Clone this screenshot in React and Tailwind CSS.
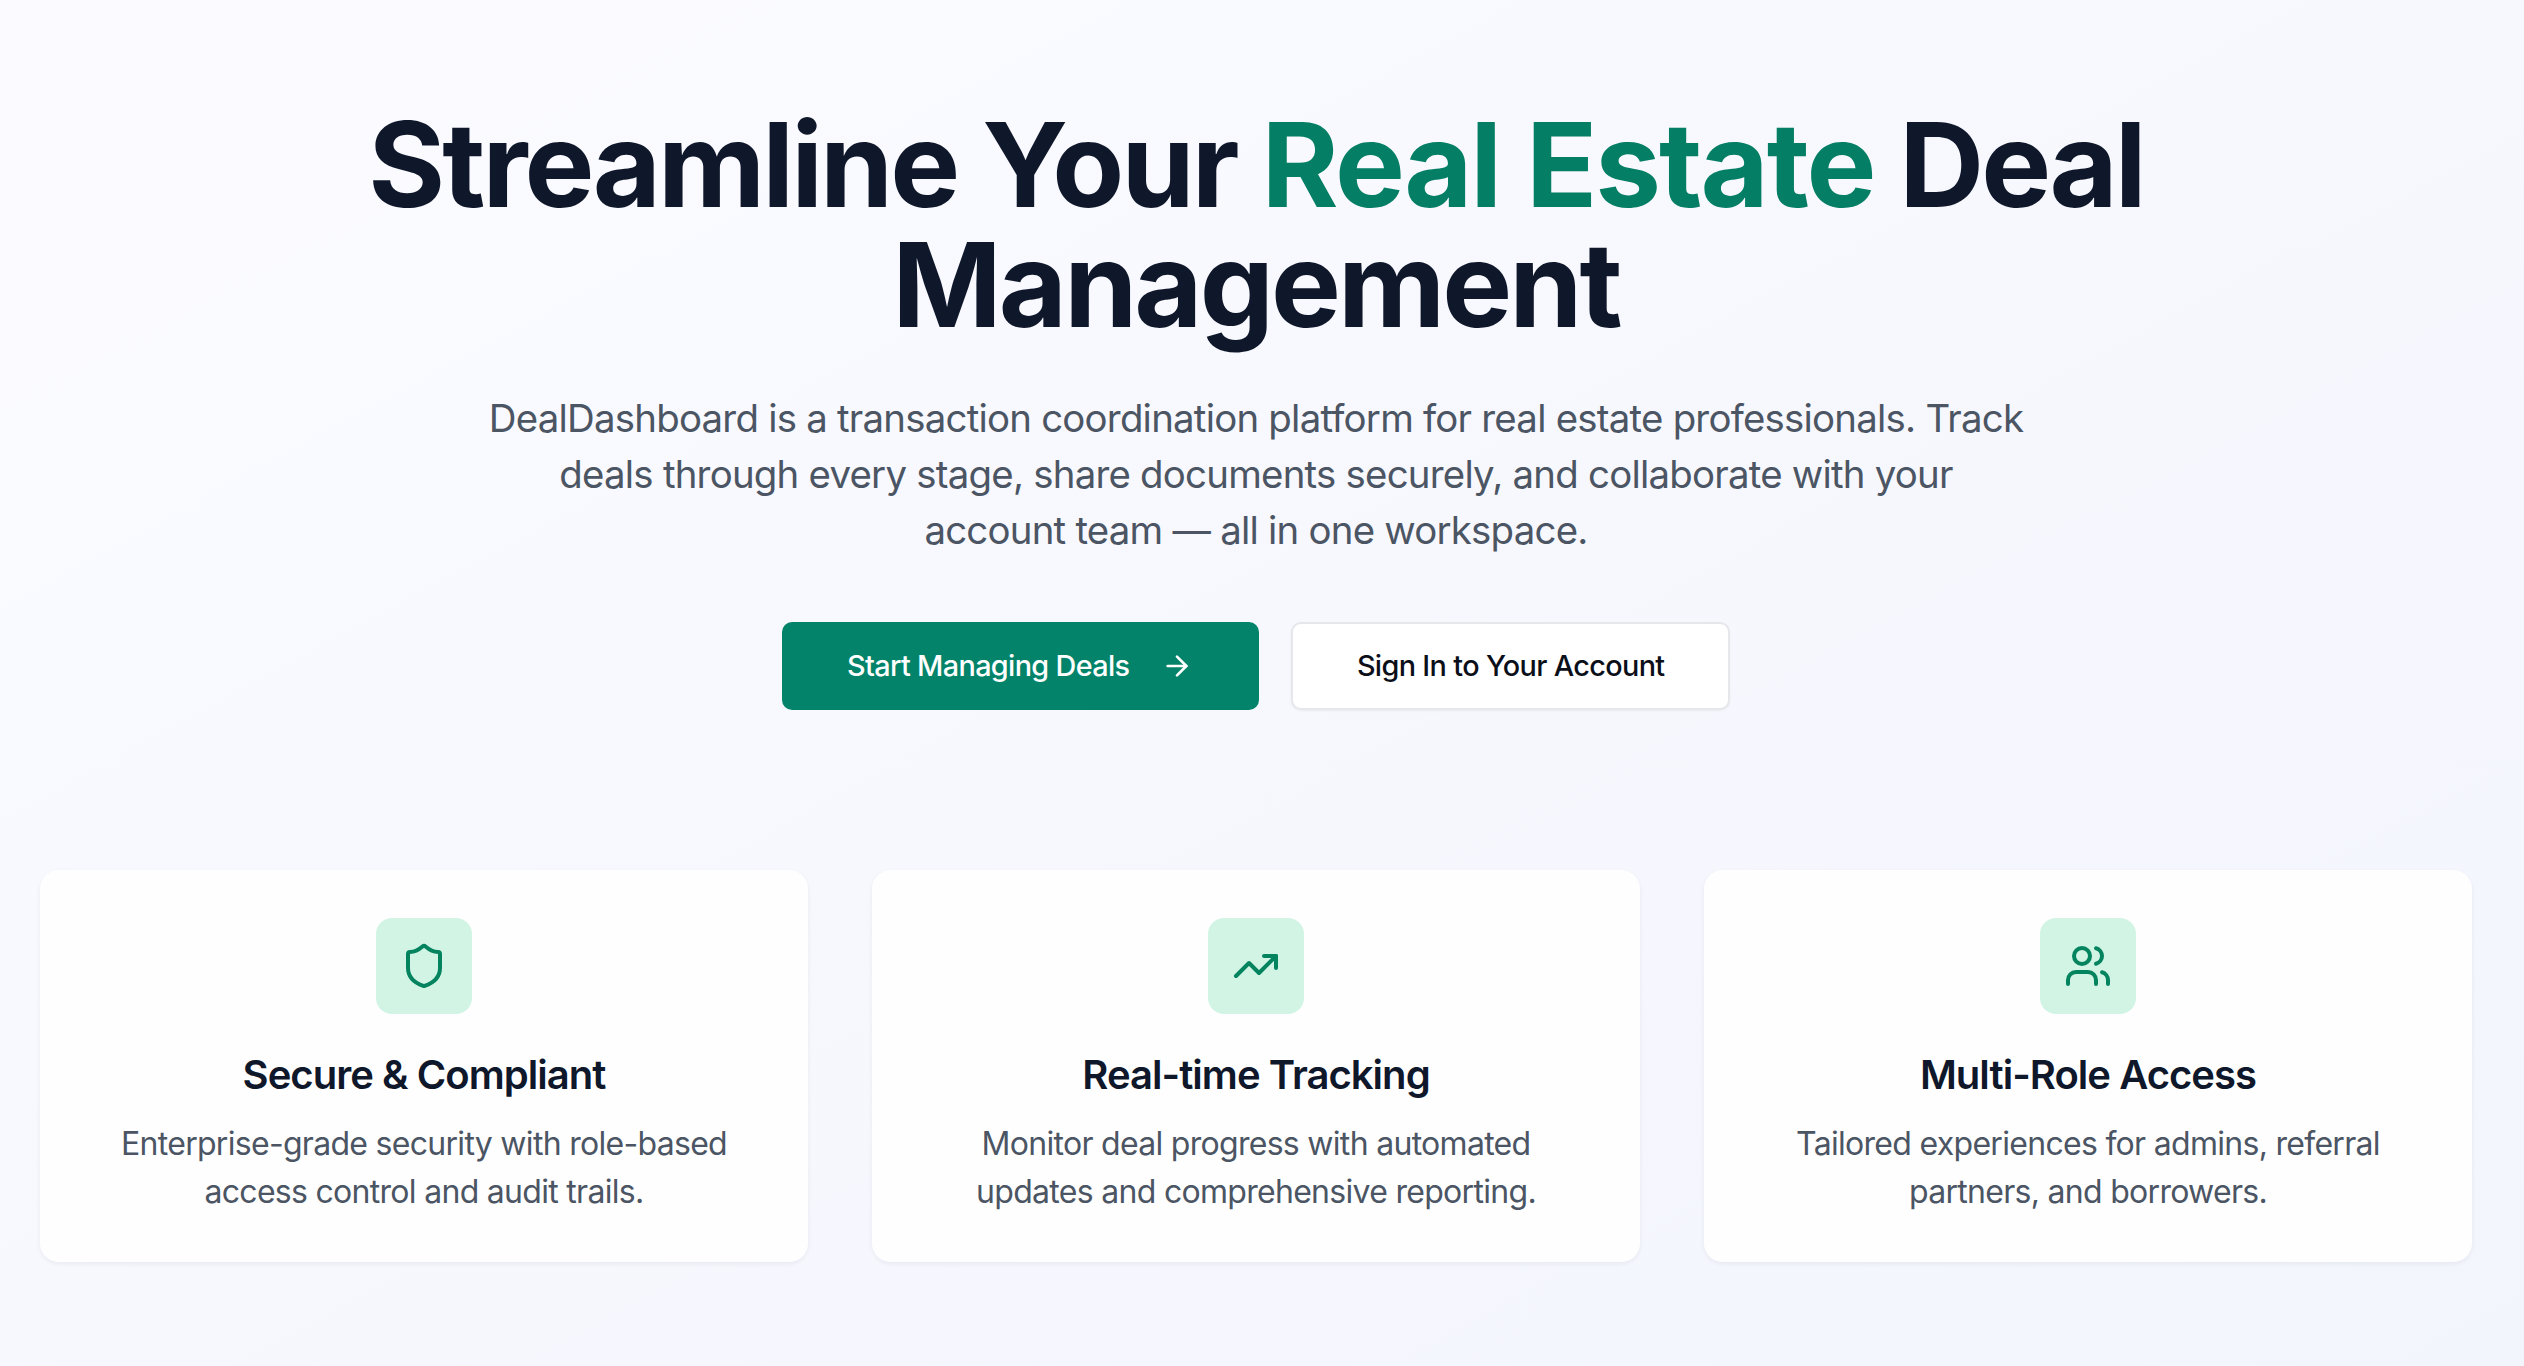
import React from 'react';
import { ArrowRight, Shield, TrendingUp, Users } from 'lucide-react';

const features = [
  {
    icon: Shield,
    title: 'Secure & Compliant',
    lines: 'Enterprise-grade security with role-based access control and audit trails.',
  },
  {
    icon: TrendingUp,
    title: 'Real-time Tracking',
    lines: 'Monitor deal progress with automated updates and comprehensive reporting.',
  },
  {
    icon: Users,
    title: 'Multi-Role Access',
    lines: 'Tailored experiences for admins, referral partners, and borrowers.',
  },
];

const FeatureCard = ({ icon: Icon, title, lines }) => (
  <div className="flex h-[392px] flex-col items-center rounded-[19px] bg-white/90 px-[64px] pt-[48px] text-center shadow-[0_2px_5px_rgba(15,23,42,0.06)]">
    <div className="flex h-[96px] w-[96px] items-center justify-center rounded-[16px] bg-[#d1f4e4]">
      <Icon className="h-[48px] w-[48px] text-[#04835f]" strokeWidth={2} />
    </div>
    <h3 className="mt-[37px] text-[40px] font-semibold leading-[48px] tracking-[-0.024em] text-[#0f172a]">{title}</h3>
    <p className="mt-[21px] text-[32px] leading-[48px] tracking-[-0.022em] text-[#4b5563]">{lines}</p>
  </div>
);

export default function App() {
  return (
    <div className="min-h-[1366px] bg-gradient-to-br from-[#fbfbff] via-[#f7f8fe] to-[#f3f5fd] pr-[12px] font-['Inter',sans-serif]">
      <div className="px-[40px] pt-[104px]">
        <div className="flex flex-col items-center text-center">
          <h1 className="w-[1900px] text-[117.5px] font-bold leading-[120px] tracking-[-0.025em] text-[#0f172a]">
            Streamline Your <span className="tracking-[-0.0175em] text-[#047e64]">Real Estate</span> Deal Management
          </h1>
          <p className="mt-[46px] w-[1538px] text-[38.4px] leading-[56px] tracking-[-0.02em] text-[#4b5563]">
            DealDashboard is a transaction coordination platform for real estate professionals. Track deals through every stage, share documents securely, and collaborate with your account team — all in one workspace.
          </p>
          <div className="mt-[64px] flex gap-[32px]">
            <button className="flex h-[88px] items-center gap-[32px] rounded-[10px] bg-[#03846a] px-[65.5px] text-[28.8px] font-medium tracking-[-0.0225em] text-white">
              Start Managing Deals
              <ArrowRight className="h-[32px] w-[32px]" strokeWidth={2} />
            </button>
            <button className="h-[88px] rounded-[10px] border-2 border-[#e5e7eb] bg-white px-[64px] text-[28.8px] font-medium tracking-[-0.0225em] text-[#0b0f19] shadow-[0_1px_3px_rgba(15,23,42,0.05)]">
              Sign In to Your Account
            </button>
          </div>
        </div>
        <div className="mt-[160px] grid grid-cols-3 gap-[64px]">
          {features.map((f) => (
            <FeatureCard key={f.title} {...f} />
          ))}
        </div>
      </div>
    </div>
  );
}
